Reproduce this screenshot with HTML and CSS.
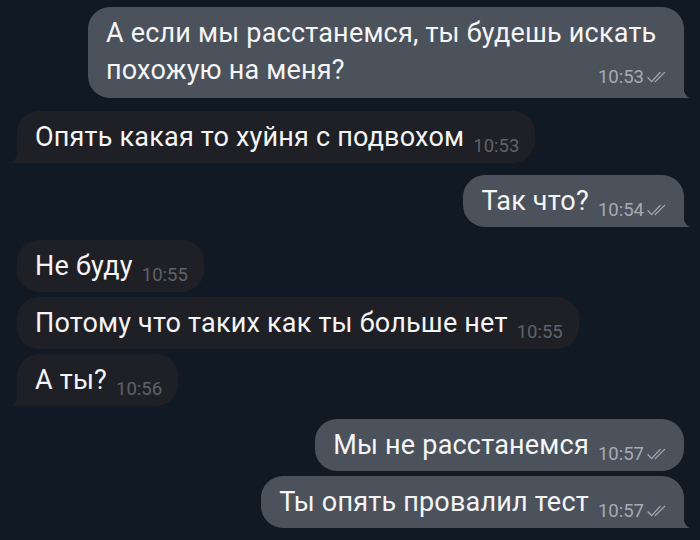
FILE: index.html
```html
<!DOCTYPE html>
<html lang="ru">
<head>
<meta charset="utf-8">
<title>Чат</title>
<link rel="stylesheet" href="styles.css">
</head>
<body>
<div class="chat">
  <div class="bubble out tail multi">
    <span class="text">А если мы расстанемся, ты будешь искать похожую на меня?</span><span class="meta"><span class="time">10:53</span><svg class="check" viewBox="0 0 22 12" width="22" height="12"><path d="M1 6.8 L4.6 10.6 L13.2 1.4"/><path d="M8.2 10.6 L17.6 1.4"/></svg></span>
  </div>
  <div class="bubble in tail">
    <span class="text">Опять какая то хуйня с подвохом</span><span class="meta"><span class="time">10:53</span></span>
  </div>
  <div class="bubble out tail near">
    <span class="text">Так что?</span><span class="meta"><span class="time">10:54</span><svg class="check" viewBox="0 0 22 12" width="22" height="12"><path d="M1 6.8 L4.6 10.6 L13.2 1.4"/><path d="M8.2 10.6 L17.6 1.4"/></svg></span>
  </div>
  <div class="bubble in">
    <span class="text">Не буду</span><span class="meta"><span class="time">10:55</span></span>
  </div>
  <div class="bubble in cont">
    <span class="text">Потому что таких как ты больше нет</span><span class="meta"><span class="time">10:55</span></span>
  </div>
  <div class="bubble in cont tail">
    <span class="text">А ты?</span><span class="meta"><span class="time">10:56</span></span>
  </div>
  <div class="bubble out">
    <span class="text">Мы не расстанемся</span><span class="meta"><span class="time">10:57</span><svg class="check" viewBox="0 0 22 12" width="22" height="12"><path d="M1 6.8 L4.6 10.6 L13.2 1.4"/><path d="M8.2 10.6 L17.6 1.4"/></svg></span>
  </div>
  <div class="bubble out cont tail">
    <span class="text">Ты опять провалил тест</span><span class="meta"><span class="time">10:57</span><svg class="check" viewBox="0 0 22 12" width="22" height="12"><path d="M1 6.8 L4.6 10.6 L13.2 1.4"/><path d="M8.2 10.6 L17.6 1.4"/></svg></span>
  </div>
</div>
</body>
</html>
```

FILE: styles.css
```css
:root {
  --bg: #111924;
  --out: #4b525c;
  --in: #1f2025;
}

html, body {
  margin: 0;
  height: 100%;
}

body {
  background: var(--bg);
  font-family: "Roboto", "Liberation Sans", sans-serif;
  color: #f5f5f6;
}

.chat {
  display: flex;
  flex-direction: column;
  padding: 7px 16px 0 17px;
}

.bubble {
  position: relative;
  z-index: 0;
  box-sizing: border-box;
  max-width: 600px;
  padding: 8px 15px 8px 18px;
  border-radius: 22px;
  font-size: 27px;
  letter-spacing: 0.2px;
  line-height: 36px;
  margin-top: 13px;
  white-space: nowrap;
}

.bubble:first-child {
  margin-top: 0;
}

.bubble.near {
  margin-top: 12px;
}

.bubble.cont {
  margin-top: 5px;
}

.out {
  align-self: flex-end;
  background: var(--out);
}

.in {
  align-self: flex-start;
  background: var(--in);
  padding-right: 16px;
}

.meta {
  display: inline-flex;
  align-items: center;
  gap: 3px;
  margin-left: 9px;
  font-size: 18.5px;
  letter-spacing: 0;
  line-height: 18px;
  vertical-align: -6px;
}

.out .time {
  color: #a6abb3;
}

.in .time {
  color: #606268;
}

.check {
  fill: none;
  stroke: #a6abb3;
  stroke-width: 1.3;
  stroke-linecap: round;
  stroke-linejoin: round;
}

.multi {
  width: 596px;
  white-space: normal;
  line-height: 37px;
  padding-bottom: 9px;
}

.multi .meta {
  float: right;
  margin-top: 16px;
}

.out.tail {
  border-bottom-right-radius: 4px;
}

.in.tail {
  border-bottom-left-radius: 4px;
}

.tail::after {
  content: "";
  position: absolute;
  z-index: -1;
  bottom: 0;
}

.out.tail::after {
  right: -6px;
  width: 10px;
  height: 12px;
  background: radial-gradient(circle at 15.3px 2px, transparent 11.3px, var(--out) 11.9px);
}

.in.tail::after {
  left: -7px;
  width: 11px;
  height: 13px;
  background: radial-gradient(circle at -5.1px 2px, transparent 12.1px, var(--in) 12.7px);
}
```
